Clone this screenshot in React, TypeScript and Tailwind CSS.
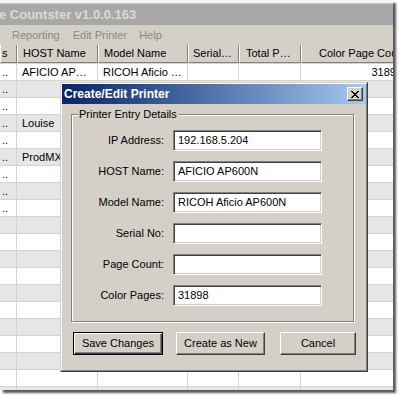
import React from 'react';

const cols = [
  { w: 'w-[17px]', head: 's', align: 'pl-[1px]' },
  { w: 'w-[81px]', head: 'HOST Name', align: 'pl-[5px]' },
  { w: 'w-[90px]', head: 'Model Name', align: 'pl-[5px]' },
  { w: 'w-[51px]', head: 'Serial…', align: 'pl-[4px]' },
  { w: 'w-[62px]', head: 'Total P…', align: 'pl-[6px]' },
  { w: 'w-[106px]', head: 'Color Page Count', align: 'pl-[17px]' },
];

const rows: string[][] = Array.from({ length: 20 }, (_, i) => [
  i < 9 ? '..' : '',
  i === 0 ? 'AFICIO AP…' : i === 3 ? 'Louise' : i === 5 ? 'ProdMX-04' : '',
  i === 0 ? 'RICOH Aficio …' : '',
  '',
  '',
  i === 0 ? '31898' : '',
]);

const fields = [
  { label: 'IP Address:', value: '192.168.5.204' },
  { label: 'HOST Name:', value: 'AFICIO AP600N' },
  { label: 'Model Name:', value: 'RICOH Aficio AP600N' },
  { label: 'Serial No:', value: '' },
  { label: 'Page Count:', value: '' },
  { label: 'Color Pages:', value: '31898' },
];

function Button({ label, w, ml, primary }: { label: string; w: string; ml: string; primary?: boolean }) {
  return (
    <div
      className={
        primary
          ? `${w} ${ml} h-[23px] flex items-center justify-center border border-black shadow-[inset_1px_1px_0_#fff,inset_-1px_-1px_0_#404040,inset_-2px_-2px_0_#808080]`
          : `${w} ${ml} h-[23px] flex items-center justify-center border border-t-white border-l-white border-r-[#404040] border-b-[#404040] shadow-[inset_-1px_-1px_0_#808080]`
      }
    >
      {label}
    </div>
  );
}

export default function App() {
  return (
    <div className="w-[399px] h-[397px] bg-white overflow-hidden font-['Liberation_Sans',Arial,sans-serif] text-[11px] text-black">
      <div className="relative w-[393px] h-[390px] bg-white overflow-hidden shadow-[3px_3px_2px_rgba(0,0,0,0.65)] flex flex-col">
        {/* top frame */}
        <div className="h-[4px] bg-[#f4f4f4] border-b border-[#c4c4c4] shrink-0" />

        {/* inactive title bar */}
        <div className="h-[21px] bg-[#a8a8a8] flex items-center shrink-0">
          <span className="ml-[-1px] text-[13px] font-bold text-[#dcdad4] whitespace-nowrap">e Countster v1.0.0.163</span>
        </div>

        {/* menu */}
        <div className="h-[20px] bg-[#d4d0c8] flex items-center text-[#888888] shrink-0">
          <span className="ml-[12px]">Reporting</span>
          <span className="ml-[13px]">Edit Printer</span>
          <span className="ml-[12px]">Help</span>
        </div>

        {/* header */}
        <div className="h-[18px] bg-[#d4d0c8] flex shrink-0 whitespace-nowrap">
          {cols.map((c, i) => (
            <div
              key={i}
              className={`${c.w} ${c.align} shrink-0 h-full flex items-center overflow-hidden border-l border-l-white border-r border-r-[#808080] border-b border-b-[#808080]`}
            >
              {c.head}
            </div>
          ))}
        </div>

        {/* rows */}
        <div className="flex flex-col">
          {rows.map((r, i) => (
            <div key={i} className={`h-[17px] flex shrink-0 border-t border-[#d8d4cc] ${i % 2 === 1 ? 'bg-[#e6e6e6]' : 'bg-white'}`}>
              {r.map((cell, j) => (
                <div
                  key={j}
                  className={`${cols[j].w} shrink-0 h-full flex items-center overflow-hidden whitespace-nowrap border-r border-[#d8d4cc] ${
                    j === 5 ? 'justify-end pr-[4px]' : j === 0 ? 'pl-[2px]' : 'pl-[5px]'
                  }`}
                >
                  {cell}
                </div>
              ))}
            </div>
          ))}
        </div>

        {/* dialog */}
        <div className="absolute left-[60px] top-[82px] w-[308px] h-[290px] bg-[#d4d0c8] border border-t-[#d4d0c8] border-l-[#d4d0c8] border-r-[#404040] border-b-[#404040]">
          <div className="h-full flex flex-col border border-t-white border-l-white border-r-[#808080] border-b-[#808080]">
            <div className="h-[20px] shrink-0 flex items-center justify-between bg-gradient-to-r from-[#0a246a] to-[#a6caf0]">
              <span className="ml-[2px] text-[12px] font-bold text-white whitespace-nowrap">Create/Edit Printer</span>
              <div className="mr-[3px] w-[16px] h-[14px] flex items-center justify-center bg-[#d4d0c8] border border-t-white border-l-white border-r-[#404040] border-b-[#404040] shadow-[inset_-1px_-1px_0_#808080]">
                <svg width="8" height="7" viewBox="0 0 8 7" shapeRendering="crispEdges">
                  <path
                    d="M0 0h2v1H0zM6 0h2v1H6zM1 1h2v1H1zM5 1h2v1H5zM2 2h4v1H2zM3 3h2v1H3zM2 4h4v1H2zM1 5h2v1H1zM5 5h2v1H5zM0 6h2v1H0zM6 6h2v1H6z"
                    fill="#000"
                  />
                </svg>
              </div>
            </div>

            {/* group box */}
            <div className="relative ml-[9px] mt-[10px] w-[283px] h-[208px] border border-[#808080] shadow-[inset_1px_1px_0_#fff,1px_1px_0_#fff] pt-[15px] flex flex-col gap-[10px]">
              <span className="absolute left-[6px] top-[-7px] px-[1px] leading-[13px] bg-[#d4d0c8] whitespace-nowrap">Printer Entry Details</span>
              {fields.map((f) => (
                <div key={f.label} className="flex items-center">
                  <div className="w-[92px] text-right whitespace-nowrap">{f.label}</div>
                  <div className="ml-[9px] w-[149px] h-[21px] bg-white flex items-center pl-[4px] whitespace-nowrap overflow-hidden border border-t-[#808080] border-l-[#808080] border-b-white border-r-white shadow-[inset_1px_1px_0_#404040,inset_-1px_-1px_0_#d4d0c8]">
                    {f.value}
                  </div>
                </div>
              ))}
            </div>

            {/* buttons */}
            <div className="flex mt-[10px]">
              <Button label="Save Changes" w="w-[90px]" ml="ml-[11px]" primary />
              <Button label="Create as New" w="w-[89px]" ml="ml-[13px]" />
              <Button label="Cancel" w="w-[76px]" ml="ml-[15px]" />
            </div>
          </div>
        </div>
      </div>
    </div>
  );
}
